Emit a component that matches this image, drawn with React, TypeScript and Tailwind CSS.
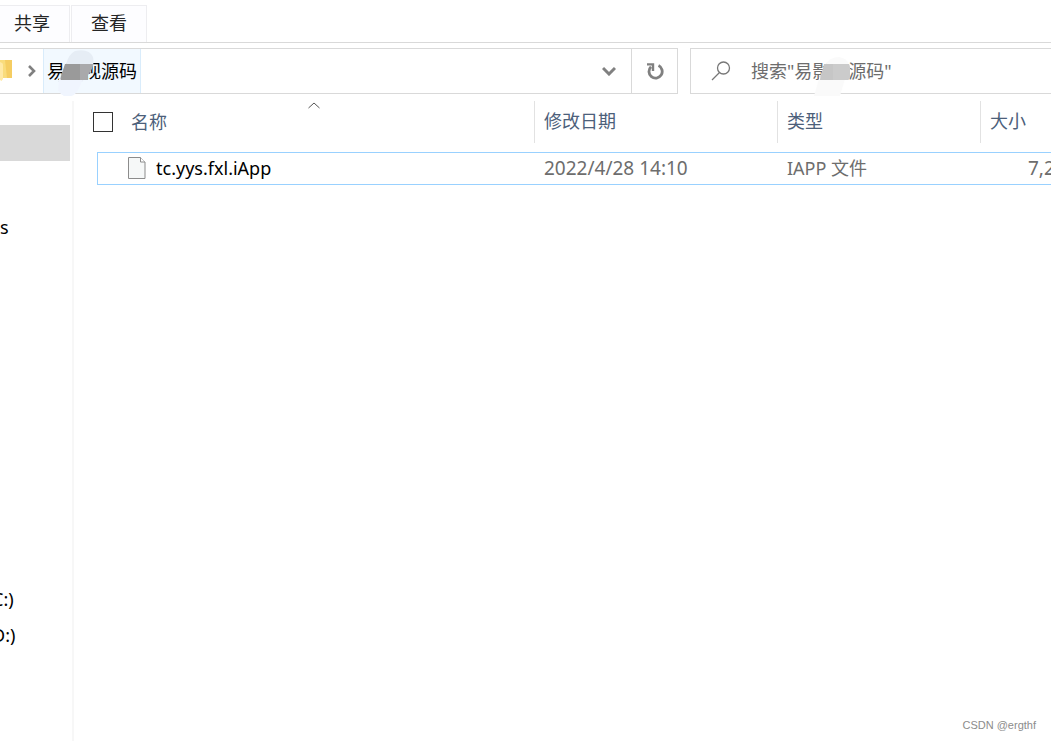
import { useState } from "react";

const tabs = ["共享", "查看"];

const columns = [
    { label: "修改日期", width: "w-[243px]" },
    { label: "类型", width: "w-[203px]" },
    { label: "大小", width: "w-[71px]" },
];

const files = [
    { name: "tc.yys.fxl.iApp", date: "2022/4/28 14:10", type: "IAPP 文件", size: "7,2" },
];

const FolderIcon = () => (
    <svg width="12" height="22" viewBox="0 0 12 22" aria-hidden="true">
        <path d="M0 0h12v18h-12z" fill="#f9dc7c" />
        <path d="M5 0h7v18h-5z" fill="#f5cd62" />
        <path d="M0 2l2 1q1 .5 1 2v14l-1.5 2-1.5-1z" fill="#ffe9a6" />
    </svg>
);

const FileIcon = () => (
    <svg width="18" height="22" viewBox="0 0 18 22" className="shrink-0" aria-hidden="true">
        <path d="M0.5 0.5h12l4.5 4.5v16.5h-16.5z" fill="#f6f8f8" stroke="#8c8c8c" />
        <path d="M12.5 0.5v4.5h4.5" fill="#fff" stroke="#8c8c8c" />
    </svg>
);

const App: React.FC = () => {
    const [search, setSearch] = useState("");
    const [allChecked, setAllChecked] = useState(false);

    return (
        <div className="flex min-h-screen flex-col overflow-hidden bg-white font-['Noto_Sans','Noto_Sans_CJK_SC',sans-serif] text-lg leading-6 text-black">
            <nav className="flex h-[43px] gap-px border-b border-[#d9d9d9] pt-[5px]">
                {tabs.map((tab) => (
                    <button key={tab} type="button" className="border border-b-0 border-[#ededf0] bg-[#fdfdff] px-[19px] pb-0.5 text-[#262626] first:border-l-0 first:pl-[14px]">
                        {tab}
                    </button>
                ))}
            </nav>

            <div className="mt-[5px] flex h-[46px] gap-3">
                <div className="flex w-[678px] shrink-0 items-stretch border border-l-0 border-[#d9d9d9]">
                    <span className="flex items-center">
                        <FolderIcon />
                    </span>
                    <span className="flex w-[31px] items-center justify-center pl-2">
                        <svg width="8" height="12" viewBox="0 0 8 12" fill="none" stroke="#808080" strokeWidth="2.6" aria-hidden="true">
                            <path d="M1 1l5 5-5 5" />
                        </svg>
                    </span>
                    <button type="button" className="relative border-x border-[#d9ecfb] bg-[#f2f9ff] px-[3px]">
                        易影视源码
                        <svg width="52" height="48" viewBox="0 0 52 48" className="absolute left-0 top-0" aria-hidden="true">
                            <path d="M22 15q3-10 9-13q14-3 18 6q1 5 0 8l-11 17h-24z" fill="#e6edf5" />
                            <path d="M15 30h24l-4 9q-4 8-8 8h-7q-4-2-5-5h-1z" fill="#f0f5fe" />
                            <path d="M21 15h16v16h-20q-1-1 0-4z" fill="#9a9a9a" />
                            <path d="M36 15h13q0 5-5 11v5h-8z" fill="#a9a9ab" />
                        </svg>
                    </button>
                    <button type="button" aria-label="历史记录" className="ml-auto flex w-11 items-center justify-center">
                        <svg width="14" height="10" viewBox="0 0 14 10" fill="none" stroke="#808080" strokeWidth="3" aria-hidden="true">
                            <path d="M1 2l6 6 6-6" />
                        </svg>
                    </button>
                    <button type="button" aria-label="刷新" className="flex w-[46px] items-center justify-center border-l border-[#d9d9d9]">
                        <svg width="18" height="18" viewBox="0 0 18 18" fill="none" stroke="#808080" strokeWidth="2.8" aria-hidden="true">
                            <path d="M5 4.8a6.6 6.6 0 1 0 7.5-1.2" />
                            <path d="M1 2.4h6v6.6" strokeWidth="2.4" />
                        </svg>
                    </button>
                </div>

                <label className="relative flex min-w-0 flex-1 items-center gap-5 border border-r-0 border-[#d9d9d9] pl-5">
                    <svg width="20" height="20" viewBox="0 0 20 20" fill="none" stroke="#777" strokeWidth="1.3" className="shrink-0" aria-hidden="true">
                        <circle cx="12.5" cy="7" r="6" />
                        <path d="M8.5 11.5l-7.5 7.5" />
                    </svg>
                    <input
                        type="text"
                        aria-label="搜索"
                        value={search}
                        onChange={(e) => setSearch(e.target.value)}
                        placeholder='搜索"易影视源码"'
                        className="w-full min-w-0 bg-transparent placeholder:text-[#6d6d6d] focus:outline-none"
                    />
                    <svg width="40" height="40" viewBox="0 0 40 40" className="absolute left-[122px] top-2" aria-hidden="true">
                        <path d="M12 8q5-8 14-8q8 1 10 8l-9 31h-26l5-17z" fill="#fafafa" />
                        <path d="M11 7h25l1 4v10l-2 2h-28q0-4 2-8z" fill="#c6c6c6" />
                        <path d="M20 7h16l1 4v10l-2 2h-15z" fill="#cbcbcb" />
                    </svg>
                </label>
            </div>

            <div className="flex flex-1 pt-[7px]">
                <aside className="w-[74px] shrink-0 border-r-2 border-[#f7f7f7] pt-6">
                    <div className="h-9 w-[70px] bg-[#d9d9d9]" />
                    <ul>
                        <li className="mt-12 flex h-9 items-center">s</li>
                        <li className="mt-[336px] flex h-9 items-center">
                            <span className="-ml-2">C:)</span>
                        </li>
                        <li className="flex h-9 items-center">
                            <span className="-ml-2">D:)</span>
                        </li>
                    </ul>
                </aside>

                <main className="flex min-w-0 flex-1 flex-col pl-[23px]">
                    <table className="w-full table-fixed border-separate border-spacing-0 whitespace-nowrap">
                        <thead>
                            <tr className="h-[42px] text-left text-[#4c607a]">
                                <th className="relative pr-1 font-normal">
                                    <label className="-ml-1 flex items-center gap-[18px]">
                                        <input
                                            type="checkbox"
                                            checked={allChecked}
                                            onChange={(e) => setAllChecked(e.target.checked)}
                                            className="size-5 appearance-none border border-[#333] bg-white checked:bg-[#0078d7]"
                                        />
                                        名称
                                    </label>
                                    <span className="absolute inset-x-0 top-px flex justify-center pr-1">
                                        <svg width="12" height="7" viewBox="0 0 12 7" fill="none" stroke="#555" aria-hidden="true">
                                            <path d="M0.5 6l5.5-5 5.5 5" />
                                        </svg>
                                    </span>
                                </th>
                                {columns.map((col) => (
                                    <th key={col.label} className={`border-l border-[#e2e2e2] pb-0.5 pl-[9px] font-normal ${col.width}`}>
                                        {col.label}
                                    </th>
                                ))}
                            </tr>
                        </thead>
                        <tbody className="before:block before:h-[9px]">
                            {files.map((file) => (
                                <tr key={file.name} className="h-[33px] text-[#6d6d6d]">
                                    <td className="border-y border-l border-[#99d1ff] pb-0.5 pl-[30px] text-black">
                                        <span className="flex items-center gap-2.5">
                                            <FileIcon />
                                            {file.name}
                                        </span>
                                    </td>
                                    <td className="border-y border-[#99d1ff] pb-0.5 pl-2.5 text-[19px]">{file.date}</td>
                                    <td className="border-y border-[#99d1ff] pb-0.5 pl-2.5">{file.type}</td>
                                    <td className="overflow-hidden border-y border-[#99d1ff] pb-0.5 pl-12 text-[19px]">{file.size}</td>
                                </tr>
                            ))}
                        </tbody>
                    </table>
                    <footer className="mt-auto pb-2 pr-[15px] text-right font-['Liberation_Sans',sans-serif] text-[11px] leading-4 text-[#8c8c8c]">
                        CSDN @ergthf
                    </footer>
                </main>
            </div>
        </div>
    );
};

export default App;
